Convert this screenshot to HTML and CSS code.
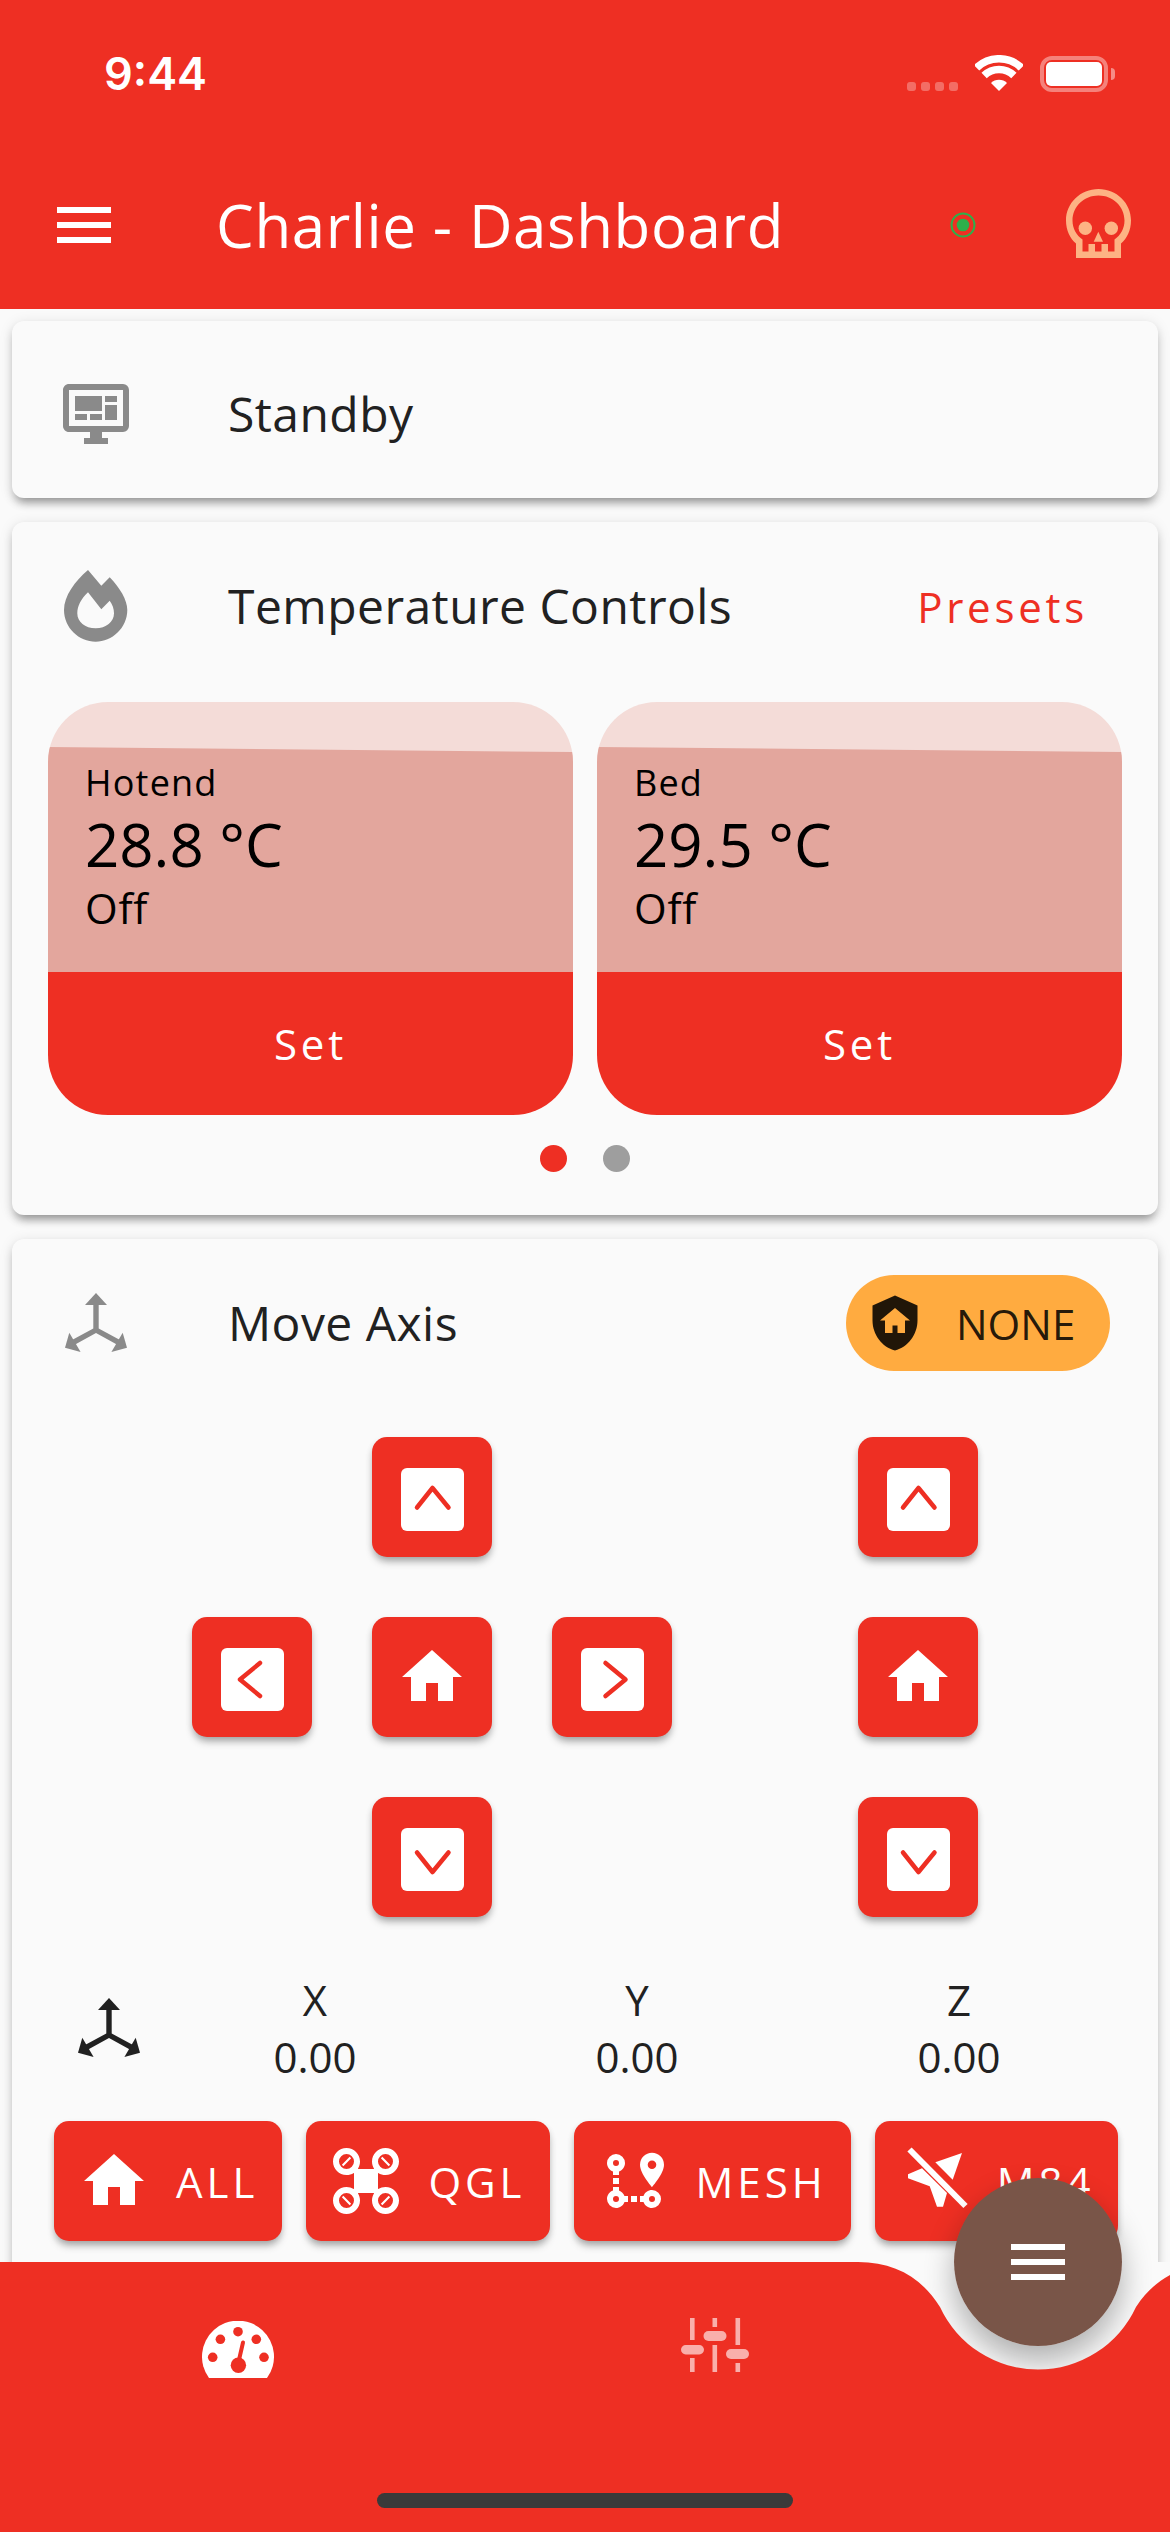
FILE: index.html
```html
<!DOCTYPE html>
<html lang="en">
<head>
<meta charset="utf-8">
<title>Charlie - Dashboard</title>
<link rel="stylesheet" href="styles.css">
</head>
<body>
<svg class="defs" width="0" height="0" aria-hidden="true">
  <symbol id="i-home" viewBox="0 0 24 24"><path d="M10 20v-6h4v6h5v-8h3L12 3 2 12h3v8z"/></symbol>
  <symbol id="i-menu" viewBox="0 0 24 24"><path d="M3,6H21V8H3V6M3,11H21V13H3V11M3,16H21V18H3V16Z"/></symbol>
  <symbol id="i-axis" viewBox="0 0 62 60">
    <path d="M31 0L42 12H20Z"/>
    <path d="M0 54.700L4.300 39.700L15.600 59Z"/>
    <path d="M62 54.700L57.700 39.700L46.400 59Z"/>
    <path d="M28.300 12V35.500L7 47L9.700 51.700L31 40L52.300 51.700L55 47L33.700 35.500V12Z"/>
  </symbol>
  <symbol id="c-up" viewBox="0 0 63 63"><rect width="63" height="63" rx="6" fill="#fff"/><path d="M16 39.500L31.500 20L47.500 39.500" class="chev"/></symbol>
  <symbol id="c-down" viewBox="0 0 63 63"><rect width="63" height="63" rx="6" fill="#fff"/><path d="M16 24.500L31.500 44L47.500 24.500" class="chev"/></symbol>
  <symbol id="c-left" viewBox="0 0 63 63"><rect width="63" height="63" rx="6" fill="#fff"/><path d="M39 15L19 31.500L39 48" class="chev"/></symbol>
  <symbol id="c-right" viewBox="0 0 63 63"><rect width="63" height="63" rx="6" fill="#fff"/><path d="M24.500 15L44.500 31.500L24.500 48" class="chev"/></symbol>
</svg>

<div class="app">
  <header class="header">
    <div class="statusbar">
      <span class="clock">9:44</span>
      <div class="signal"><i></i><i></i><i></i><i></i></div>
      <svg class="wifi" viewBox="0 0 48 36" width="48" height="36">
        <path d="M1.600 12.800A32.300 32.300 0 0 1 46.400 12.800M9.100 20.500A21.500 21.500 0 0 1 38.900 20.500" fill="none" stroke="#fff" stroke-width="7.600"/>
        <path d="M24 36L16 28A11.300 11.300 0 0 1 32 28Z" fill="#fff"/>
      </svg>
      <div class="battery"><div class="battery-level"></div></div>
      <div class="battery-cap"></div>
    </div>
    <div class="appbar">
      <svg class="icon72 white"><use href="#i-menu"/></svg>
      <h1 class="title">Charlie - Dashboard</h1>
      <svg class="online" viewBox="0 0 30 30" width="30" height="30">
        <circle cx="15" cy="15" r="11.500" fill="none" stroke="#2DB04B" stroke-width="2"/>
        <circle cx="15" cy="15" r="6.300" fill="#2DB04B"/>
      </svg>
      <svg class="skull" viewBox="0 0 65 69" width="65" height="69">
        <path fill-rule="evenodd" d="M32.500 0C14.500 0 0 14 0 31.500C0 41 4 49.500 10 54.500V69H55V54.500C61 49.500 65 41 65 31.500C65 14 50.500 0 32.500 0ZM32.500 6.500C18 6.500 6.500 17.500 6.500 31.500C6.500 39.500 10.500 46.500 16.500 50.500V62.500H22.500V55H29V62.500H35.500V55H42V62.500H48.500V50.500C54.500 46.500 58.500 39.500 58.500 31.500C58.500 17.500 47 6.500 32.500 6.500Z"/>
        <circle cx="19.300" cy="39.300" r="6.700"/><circle cx="45.300" cy="39.300" r="6.700"/>
        <path d="M32.300 42.700L27.700 52.700H37Z"/>
      </svg>
    </div>
  </header>

  <main class="main">
    <section class="card card-status">
      <div class="card-row">
        <svg class="icon72 gray" viewBox="0 0 24 24"><path d="M21,16V4H3V16H21M21,2A2,2 0 0,1 23,4V16A2,2 0 0,1 21,18H14V20H16V22H8V20H10V18H3C1.89,18 1,17.1 1,16V4C1,2.89 1.89,2 3,2H21M5,6H14V11H5V6M15,6H19V8H15V6M19,9V14H15V9H19M5,12H9V14H5V12M10,12H14V14H10V12Z"/></svg>
        <span class="card-title">Standby</span>
      </div>
    </section>

    <section class="card card-temp">
      <div class="card-row">
        <svg class="icon72 gray" viewBox="0 0 72 72"><path fill-rule="evenodd" d="M28 0L41.300 15.700L49.700 7.300C60 18 67.300 30 67.300 40C67.300 58 52 71.700 35.700 71.700C19 71.700 4 58 4 40C4 26 15 11 28 0ZM28 22.300C21 29 17.300 36 17.300 43.300C17.300 52 25 58.300 35.700 58.300C46 58.300 54 52 54 43.300C54 38.500 52.500 34.500 49.700 30.700L41.300 39.300Z"/></svg>
        <span class="card-title">Temperature Controls</span>
        <span class="presets">Presets</span>
      </div>
      <div class="heaters">
        <article class="heater">
          <div class="heater-body">
            <div class="heater-name">Hotend</div>
            <div class="heater-temp">28.8 °C</div>
            <div class="heater-state">Off</div>
          </div>
          <div class="heater-set">Set</div>
        </article>
        <article class="heater">
          <div class="heater-body">
            <div class="heater-name">Bed</div>
            <div class="heater-temp">29.5 °C</div>
            <div class="heater-state">Off</div>
          </div>
          <div class="heater-set">Set</div>
        </article>
      </div>
      <div class="dots"><i class="dot active"></i><i class="dot"></i></div>
    </section>

    <section class="card card-move">
      <div class="move-head">
        <svg class="axis gray" width="62" height="60"><use href="#i-axis"/></svg>
        <span class="card-title move-title">Move Axis</span>
        <div class="pill">
          <svg class="pill-icon" viewBox="0 0 24 24" width="60" height="60"><path d="M11,13H13V16H16V11H18L12,6L6,11H8V16H11V13M12,1L21,5V11C21,16.55 17.16,21.74 12,23C6.84,21.74 3,16.55 3,11V5L12,1Z"/></svg>
          <span>NONE</span>
        </div>
      </div>

      <div class="jog">
        <div class="pad">
          <button class="jog-btn pos-up"><svg class="chev-box"><use href="#c-up"/></svg></button>
          <button class="jog-btn pos-left"><svg class="chev-box"><use href="#c-left"/></svg></button>
          <button class="jog-btn pos-home"><svg class="icon72 white"><use href="#i-home"/></svg></button>
          <button class="jog-btn pos-right"><svg class="chev-box"><use href="#c-right"/></svg></button>
          <button class="jog-btn pos-down"><svg class="chev-box"><use href="#c-down"/></svg></button>
        </div>
        <div class="zcol">
          <button class="jog-btn"><svg class="chev-box"><use href="#c-up"/></svg></button>
          <button class="jog-btn"><svg class="icon72 white"><use href="#i-home"/></svg></button>
          <button class="jog-btn"><svg class="chev-box"><use href="#c-down"/></svg></button>
        </div>
      </div>

      <div class="position">
        <svg class="axis dark" width="62" height="60"><use href="#i-axis"/></svg>
        <div class="coord"><div>X</div><div>0.00</div></div>
        <div class="coord"><div>Y</div><div>0.00</div></div>
        <div class="coord"><div>Z</div><div>0.00</div></div>
      </div>

      <div class="actions">
        <button class="action"><svg class="icon72 white"><use href="#i-home"/></svg><span>ALL</span></button>
        <button class="action"><svg class="icon72 white" viewBox="0 0 24 24"><path fill-rule="evenodd" d="M5.500,1C8,1 10,3 10,5.500C10,6.380 9.750,7.200 9.310,7.900L9.410,8H14.590L14.690,7.900C14.250,7.200 14,6.380 14,5.500C14,3 16,1 18.500,1C21,1 23,3 23,5.500C23,8 21,10 18.500,10C17.620,10 16.800,9.750 16.100,9.310L16,9.410V14.590L16.100,14.690C16.800,14.250 17.620,14 18.500,14C21,14 23,16 23,18.500C23,21 21,23 18.500,23C16,23 14,21 14,18.500C14,17.620 14.250,16.800 14.690,16.100L14.590,16H9.410L9.310,16.100C9.750,16.800 10,17.620 10,18.500C10,21 8,23 5.500,23C3,23 1,21 1,18.500C1,16 3,14 5.500,14C6.380,14 7.200,14.250 7.900,14.690L8,14.590V9.410L7.900,9.310C7.200,9.750 6.380,10 5.500,10C3,10 1,8 1,5.500C1,3 3,1 5.500,1M5.500,3A2.500,2.500 0 0,0 3,5.500A2.500,2.500 0 0,0 5.500,8A2.500,2.500 0 0,0 8,5.500A2.500,2.500 0 0,0 5.500,3M5.500,16A2.500,2.500 0 0,0 3,18.500A2.500,2.500 0 0,0 5.500,21A2.500,2.500 0 0,0 8,18.500A2.500,2.500 0 0,0 5.500,16M18.500,3A2.500,2.500 0 0,0 16,5.500A2.500,2.500 0 0,0 18.500,8A2.500,2.500 0 0,0 21,5.500A2.500,2.500 0 0,0 18.500,3M18.500,16A2.500,2.500 0 0,0 16,18.500A2.500,2.500 0 0,0 18.500,21A2.500,2.500 0 0,0 21,18.500A2.500,2.500 0 0,0 18.500,16Z"/><path d="M4.200 6.800L6.800 4.200M17.200 4.200L19.800 6.800M4.200 17.200L6.800 19.800M17.200 19.800L19.800 17.200" class="blade"/></svg><span>QGL</span></button>
        <button class="action"><svg class="icon72 white" viewBox="0 0 24 24"><path d="M18,15A3,3 0 0,1 21,18A3,3 0 0,1 18,21C16.69,21 15.58,20.17 15.17,19H14V17H15.17C15.58,15.83 16.69,15 18,15M18,17A1,1 0 0,0 17,18A1,1 0 0,0 18,19A1,1 0 0,0 19,18A1,1 0 0,0 18,17M18,8A1.43,1.43 0 0,0 19.43,6.57C19.43,5.78 18.79,5.14 18,5.14C17.21,5.14 16.57,5.78 16.57,6.57A1.43,1.43 0 0,0 18,8M18,2.57A4,4 0 0,1 22,6.57C22,9.56 18,14 18,14C18,14 14,9.56 14,6.57A4,4 0 0,1 18,2.57M8.83,17H10V19H8.83C8.42,20.17 7.31,21 6,21A3,3 0 0,1 3,18C3,16.69 3.83,15.58 5,15.17V14H7V15.17C7.85,15.47 8.53,16.15 8.83,17M6,17A1,1 0 0,0 5,18A1,1 0 0,0 6,19A1,1 0 0,0 7,18A1,1 0 0,0 6,17M6,3A3,3 0 0,1 9,6C9,7.31 8.17,8.42 7,8.83V10H5V8.83C3.83,8.42 3,7.31 3,6A3,3 0 0,1 6,3M6,5A1,1 0 0,0 5,6A1,1 0 0,0 6,7A1,1 0 0,0 7,6A1,1 0 0,0 6,5M11,19V17H13V19H11M7,13H5V11H7V13Z"/></svg><span>MESH</span></button>
        <button class="action"><svg class="icon72 white m84" viewBox="0 0 72 72"><path d="M63 8L53.700 34.700L36.300 17.300Z"/><path d="M9 29.300L23 23.300L48 48L44 61.700L38 61.700L30.700 41.300L9 33.300Z"/><path d="M10.500 4.500L66.500 61" class="strike"/></svg><span>M84</span></button>
      </div>
    </section>
  </main>

  <footer class="footer">
    <div class="fab-shadow"></div>
    <svg class="bar" viewBox="0 0 1170 270" width="1170" height="270">
      <path d="M0 0H858C895 0 922 16 940 45A108 108 0 0 0 1136 45C1147 28 1158 20 1170 13V270H0Z"/>
    </svg>
    <nav class="nav">
      <svg class="gauge" viewBox="0 0 72 57" width="72" height="57">
        <path d="M7 57A36 36 0 1 1 65 57Z" fill="#fff"/>
        <g class="gauge-cut">
          <circle cx="36" cy="10.700" r="4.800"/><circle cx="18.400" cy="18.300" r="4.800"/><circle cx="54.300" cy="18.300" r="4.800"/>
          <circle cx="10.700" cy="36.300" r="4.800"/><circle cx="62" cy="36.300" r="4.800"/>
          <circle cx="36.400" cy="44.300" r="7.700"/>
          <path d="M37.200 38L41 21.500" class="needle"/>
        </g>
      </svg>
      <svg class="sliders" viewBox="0 0 68 54" width="68" height="54">
        <rect x="9" y="0" width="4.600" height="22"/><rect x="0" y="27" width="23" height="9.500" rx="4.700"/><rect x="9" y="40" width="4.600" height="14"/>
        <rect x="31.500" y="0" width="4.600" height="9"/><rect x="22.500" y="13" width="23" height="10" rx="5"/><rect x="31.500" y="27" width="4.600" height="27"/>
        <rect x="54.500" y="0" width="4.600" height="27"/><rect x="45" y="31" width="23" height="10" rx="5"/><rect x="54.500" y="45" width="4.600" height="9"/>
      </svg>
    </nav>
    <div class="fab"><svg class="icon72 white"><use href="#i-menu"/></svg></div>
    <div class="home-indicator"></div>
  </footer>
</div>
</body>
</html>
```

FILE: styles.css
```css
* { box-sizing: border-box; }
html, body { margin: 0; padding: 0; }
body {
  width: 1170px;
  height: 2532px;
  overflow: hidden;
  background: #fafafa;
  font-family: "Open Sans", "Noto Sans", sans-serif;
  color: #212121;
}
.defs { position: absolute; }
.app { width: 1170px; height: 2532px; display: flex; flex-direction: column; overflow: hidden; }

/* header */
.header { background: #ee2f23; height: 309px; flex: none; }
.statusbar { height: 141px; display: flex; align-items: flex-start; padding: 55px 0 0 104px; color: #fff; }
.clock { font-family: Inter, sans-serif; font-weight: 600; font-size: 45px; line-height: 38px; width: 803px; }
.signal { display: flex; gap: 5px; margin-top: 27px; width: 68px; }
.signal i { width: 9px; height: 9px; border-radius: 3px; background: rgba(255,255,255,.3); }
.wifi { margin-right: 17px; }
.battery { width: 68px; height: 36px; margin-top: 1px; border: 4px solid rgba(255,255,255,.4); border-radius: 12px; padding: 2px; }
.battery-level { width: 100%; height: 100%; background: #fff; border-radius: 5px; }
.battery-cap { width: 4px; height: 12px; margin: 13px 0 0 3px; background: rgba(255,255,255,.45); border-radius: 0 4px 4px 0; }
.appbar { height: 168px; display: flex; align-items: center; padding-left: 48px; color: #fff; }
.title { margin: 0 0 0 96px; font-size: 60px; line-height: 72px; font-weight: 400; letter-spacing: .6px; width: 732px; white-space: nowrap; }
.online { flex: none; }
.skull { margin: 0 0 3px 88px; fill: #fdb384; }

.icon72 { width: 72px; height: 72px; flex: none; display: block; }
.white { fill: #fff; }
.gray { fill: #8a8a8a; }
.dark { fill: #212121; }

/* content */
.main { flex: 1; overflow: hidden; padding: 12px 12px 0; display: flex; flex-direction: column; gap: 24px; }
.card { background: #fafafa; border-radius: 12px; flex: none; box-shadow: 0 9px 9px -6px rgba(0,0,0,.28), 0 6px 9px rgba(0,0,0,.14), 0 2px 14px rgba(0,0,0,.1); }
.card-row { display: flex; align-items: center; height: 72px; padding-left: 48px; }
.card-title { font-size: 48px; line-height: 64px; letter-spacing: .45px; margin-left: 96px; white-space: nowrap; }
.card-status { height: 177px; padding-top: 57px; }

.card-temp { height: 693px; padding-top: 48px; }
.presets { margin-left: auto; margin-right: 70px; color: #ee2f23; font-size: 42px; letter-spacing: 3.75px; }
.heaters { display: flex; gap: 24px; padding: 0 36px; margin-top: 60px; }
.heater { width: 525px; height: 413px; border-radius: 60px; overflow: hidden; }
.heater-body { position: relative; height: 270px; background: #f4dcd8; padding: 57px 0 0 37px; color: #000; }
.heater-body::before { content: ""; position: absolute; inset: 0; background: #e3a69d; clip-path: polygon(0 45px, 100% 50px, 100% 100%, 0 100%); }
.heater-name, .heater-temp, .heater-state { position: relative; white-space: nowrap; }
.heater-name { font-size: 36px; line-height: 48px; letter-spacing: 1.2px; }
.heater-temp { font-size: 60px; line-height: 74px; }
.heater-state { font-size: 42px; line-height: 54px; letter-spacing: .75px; }
.heater-set { height: 143px; background: #ee2f23; color: #fff; font-size: 42px; letter-spacing: 3.75px; display: flex; align-items: center; justify-content: center; }
.dots { display: flex; justify-content: center; gap: 36px; margin-top: 30px; }
.dot { width: 27px; height: 27px; border-radius: 50%; background: #9e9e9e; }
.dot.active { background: #ee2f23; }

.card-move { height: 1100px; padding-top: 36px; }
.move-head { display: flex; align-items: center; height: 96px; padding: 0 48px 0 53px; }
.axis { flex: none; display: block; }
.move-title { margin-left: 101px; }
.pill { margin-left: auto; width: 264px; height: 96px; border-radius: 48px; background: #ffab40; display: flex; align-items: center; padding-left: 19px; color: rgba(0,0,0,.87); font-size: 42px; }
.pill-icon { fill: rgba(0,0,0,.87); flex: none; margin-right: 31px; }

.jog { display: flex; padding-left: 180px; gap: 186px; margin-top: 66px; }
.pad { display: grid; grid-template-columns: repeat(3, 120px); grid-template-rows: repeat(3, 120px); gap: 60px; }
.pos-up { grid-area: 1 / 2; }
.pos-left { grid-area: 2 / 1; }
.pos-home { grid-area: 2 / 2; }
.pos-right { grid-area: 2 / 3; }
.pos-down { grid-area: 3 / 2; }
.zcol { display: flex; flex-direction: column; gap: 60px; }
.jog-btn { width: 120px; height: 120px; border: 0; padding: 0; background: #ee2f23; border-radius: 15px; display: flex; align-items: center; justify-content: center; box-shadow: 0 6px 9px -2px rgba(0,0,0,.3), 0 3px 6px rgba(0,0,0,.1); }
.chev-box { width: 63px; height: 63px; display: block; margin-top: 5px; }
.chev { fill: none; stroke: #ee2f23; stroke-width: 4.500; stroke-linecap: round; stroke-linejoin: round; }

.position { display: flex; align-items: center; margin-top: 54px; padding-left: 66px; }
.position .axis { margin-right: 14px; }
.coord { width: 322px; text-align: center; font-size: 42px; line-height: 57px; }

.actions { display: flex; gap: 24px; margin-top: 36px; padding-left: 42px; }
.action { height: 120px; border: 0; padding: 0 24px; background: #ee2f23; border-radius: 15px; display: flex; align-items: center; gap: 26px; color: #fff; font-family: inherit; font-size: 42px; letter-spacing: 4px; box-shadow: 0 6px 9px -2px rgba(0,0,0,.3), 0 3px 6px rgba(0,0,0,.1); }
.blade { fill: none; stroke: #fff; stroke-width: .7; }
.strike { fill: none; stroke: #fff; stroke-width: 6; }

/* bottom bar */
.footer { position: relative; height: 270px; flex: none; background: #fafafa; }
.bar { position: absolute; left: 0; top: 0; fill: #ee2f23; }
.fab-shadow { position: absolute; left: 954px; top: -84px; width: 168px; height: 168px; border-radius: 50%; box-shadow: 0 15px 30px rgba(0,0,0,.3); }
.nav { position: relative; display: flex; align-items: flex-start; padding: 56px 0 0 202px; }
.gauge { margin-top: 3px; }
.gauge-cut { fill: #ee2f23; }
.needle { fill: none; stroke: #ee2f23; stroke-width: 4; stroke-linecap: round; }
.sliders { margin-left: 407px; fill: rgba(255,255,255,.62); }
.fab { position: absolute; left: 954px; top: -84px; width: 168px; height: 168px; border-radius: 50%; background: #795548; display: flex; align-items: center; justify-content: center; }
.home-indicator { position: absolute; left: 377px; top: 231px; width: 416px; height: 15px; border-radius: 8px; background: #3a3a3a; }
```
